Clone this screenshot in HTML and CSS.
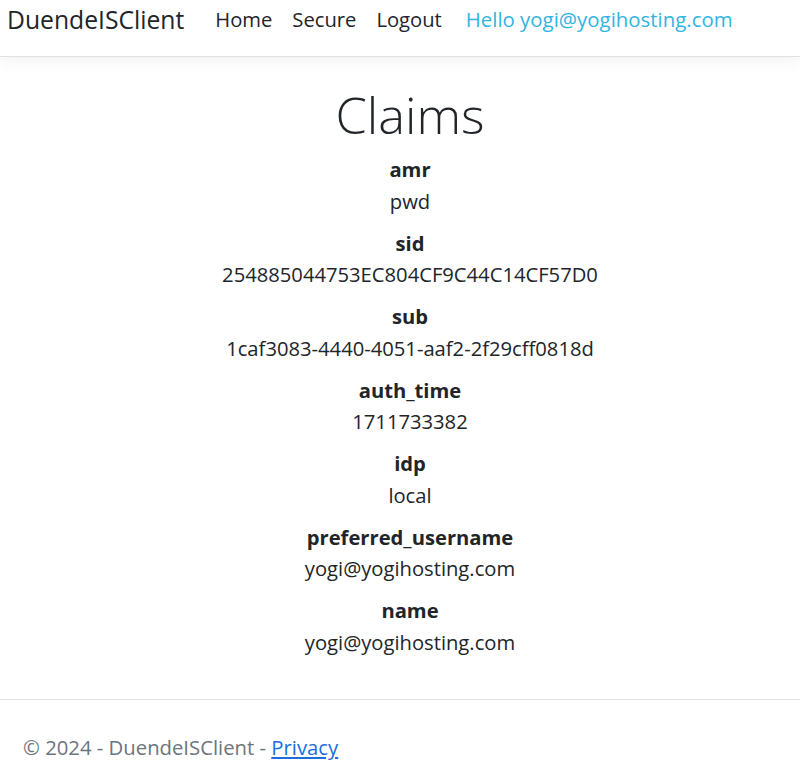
FILE: index.html
```html
<!DOCTYPE html>
<html lang="en">
<head>
    <meta charset="UTF-8">
    <meta name="viewport" content="width=device-width, initial-scale=1.0">
    <title>Claims - DuendeISClient</title>
    <link rel="stylesheet" href="styles.css">
</head>
<body>
    <header class="navbar">
        <a class="navbar-brand" href="#">DuendeISClient</a>
        <ul class="nav">
            <li><a class="nav-link" href="#">Home</a></li>
            <li><a class="nav-link" href="#">Secure</a></li>
            <li><a class="nav-link" href="#">Logout</a></li>
            <li><span class="nav-text">Hello yogi@yogihosting.com</span></li>
        </ul>
    </header>

    <main class="container">
        <h1 class="display-4">Claims</h1>
        <dl class="claims">
            <dt>amr</dt>
            <dd>pwd</dd>
            <dt>sid</dt>
            <dd>254885044753EC804CF9C44C14CF57D0</dd>
            <dt>sub</dt>
            <dd>1caf3083-4440-4051-aaf2-2f29cff0818d</dd>
            <dt>auth_time</dt>
            <dd>1711733382</dd>
            <dt>idp</dt>
            <dd>local</dd>
            <dt>preferred_username</dt>
            <dd>yogi@yogihosting.com</dd>
            <dt>name</dt>
            <dd>yogi@yogihosting.com</dd>
        </dl>
    </main>

    <footer class="footer">
        <div class="footer-text">
            &copy; 2024 - DuendeISClient - <a href="#">Privacy</a>
        </div>
    </footer>
</body>
</html>
```

FILE: styles.css
```css
body {
    font-family: "Open Sans", "Noto Sans", sans-serif;
    color: #212529;
    background-color: #fff;
    margin: 0;
    padding: 0;
}
a {
    text-decoration: none;
}
.navbar {
    display: flex;
    align-items: center;
    height: 57px;
    padding: 0 7px;
    border-bottom: 1px solid #dee2e6;
    box-shadow: 0 5px 15px rgba(0, 0, 0, 0.05);
    box-sizing: border-box;
    position: relative;
}
.navbar-brand {
    font-size: 24.7px;
    color: #212529;
    margin-top: -18px;
}
.nav {
    display: flex;
    list-style: none;
    margin: -18px 0 0 31px;
    padding: 0;
    gap: 20px;
}
.nav-link {
    font-size: 20.2px;
    color: #212529;
}
.nav-text {
    font-size: 20.4px;
    color: #31b5e0;
    margin-left: 4px;
}
.container {
    padding: 25px 0 0 20px;
    text-align: center;
}
.display-4 {
    font-size: 50.5px;
    font-weight: 300;
    line-height: 65px;
    margin: 0 0 7px;
}
.claims {
    margin: 0;
}
.claims dt {
    font-size: 20.2px;
    font-weight: 700;
    line-height: 31.5px;
}
.claims dd {
    font-size: 20.2px;
    line-height: 31.5px;
    margin: 0 0 10.5px;
}
.footer {
    margin-top: 41px;
    border-top: 1px solid #dee2e6;
    padding: 32px 23px 0;
}
.footer-text {
    font-size: 20.3px;
    color: #6c757d;
    line-height: 31.5px;
}
.footer-text a {
    color: #1a6ee0;
    text-decoration: underline;
}
```
